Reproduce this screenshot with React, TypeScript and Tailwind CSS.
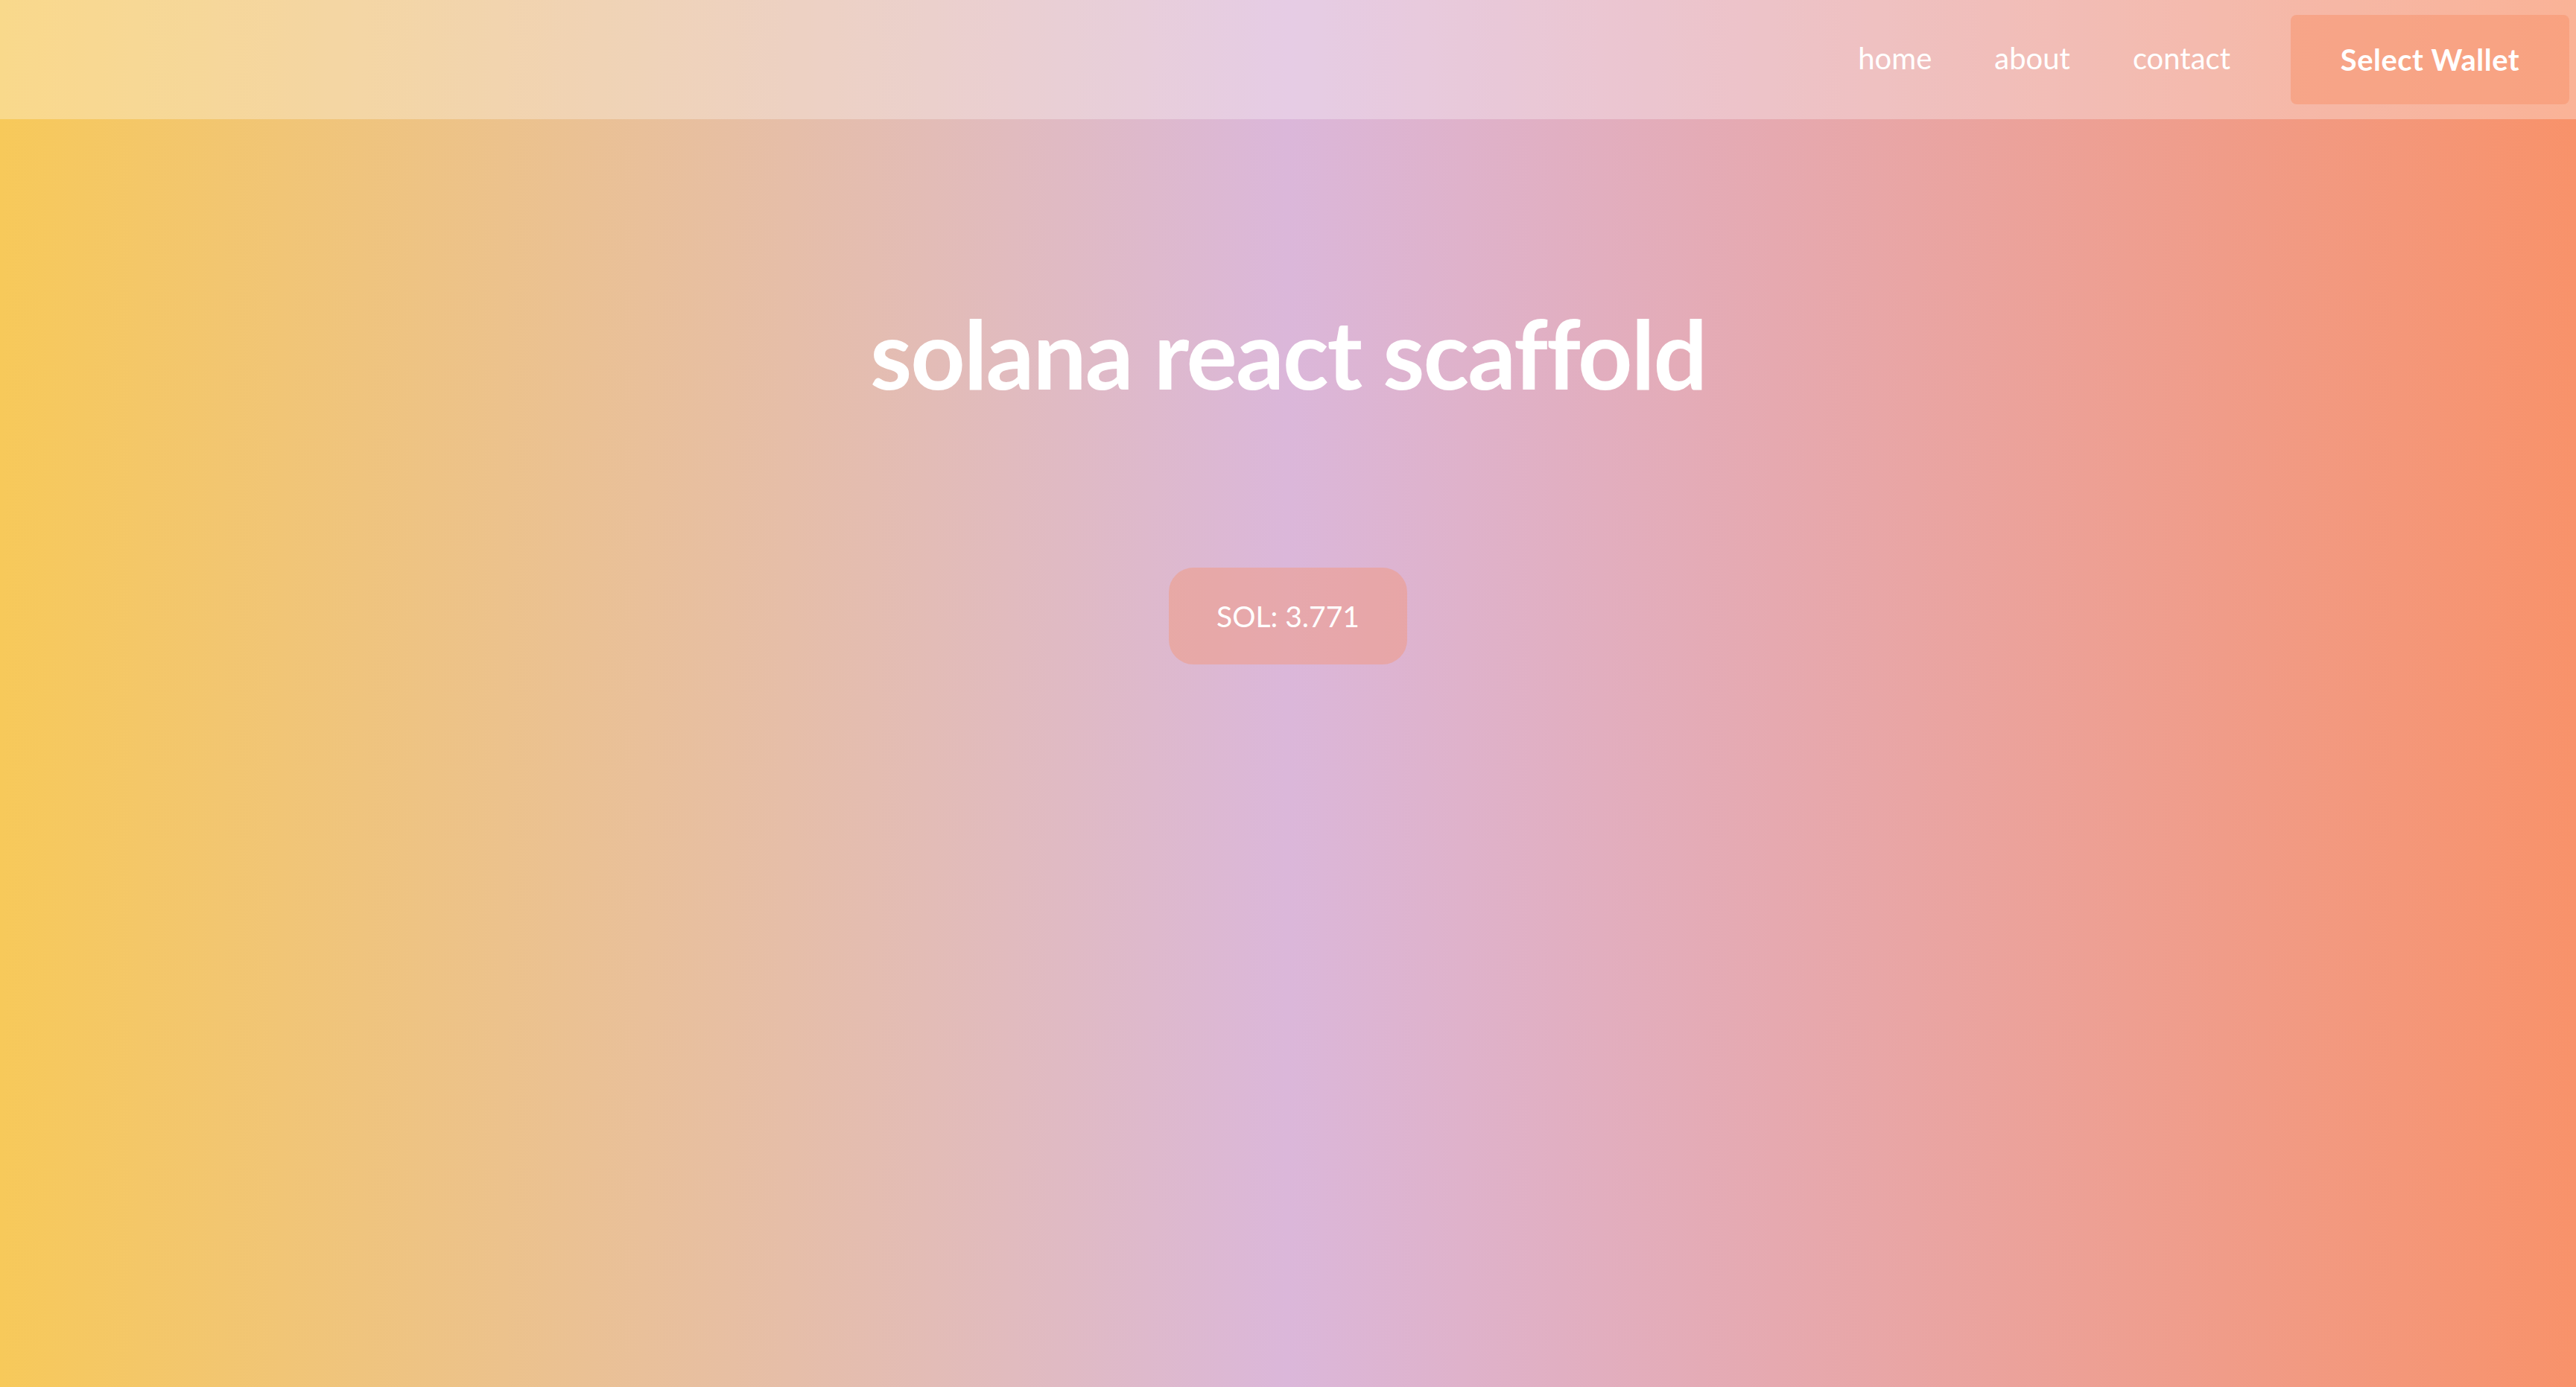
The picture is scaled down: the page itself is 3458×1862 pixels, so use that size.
export default function App() {
  return (
    <div
      className="min-h-screen w-full bg-[linear-gradient(to_right,#f7c95a_0%,#dbb7da_50%,#f8926a_100%)] text-white"
      style={{ fontFamily: "Lato, 'Open Sans', sans-serif" }}
    >
      <header className="flex h-[160px] w-full items-center justify-end bg-white/30 pr-[9px]">
        <nav className="flex items-center gap-[84px] pr-[81px] pb-[4px] text-[40px] leading-none">
          <a className="cursor-pointer">home</a>
          <a className="cursor-pointer">about</a>
          <a className="cursor-pointer">contact</a>
        </nav>
        <button className="flex h-[120px] w-[374px] items-center justify-center rounded-[8px] bg-[#f8926a]/50 text-[40px] font-bold tracking-[0.5px]">
          Select Wallet
        </button>
      </header>
      <main className="flex flex-col items-center">
        <h1 className="mt-[250px] text-[128px] font-bold leading-none tracking-[-2px]">
          solana react scaffold
        </h1>
        <div className="mt-[224px] flex h-[130px] w-[320px] items-center justify-center rounded-[33px] bg-[#f8926a]/40 text-[39px] leading-none">
          SOL: 3.771
        </div>
      </main>
    </div>
  );
}
